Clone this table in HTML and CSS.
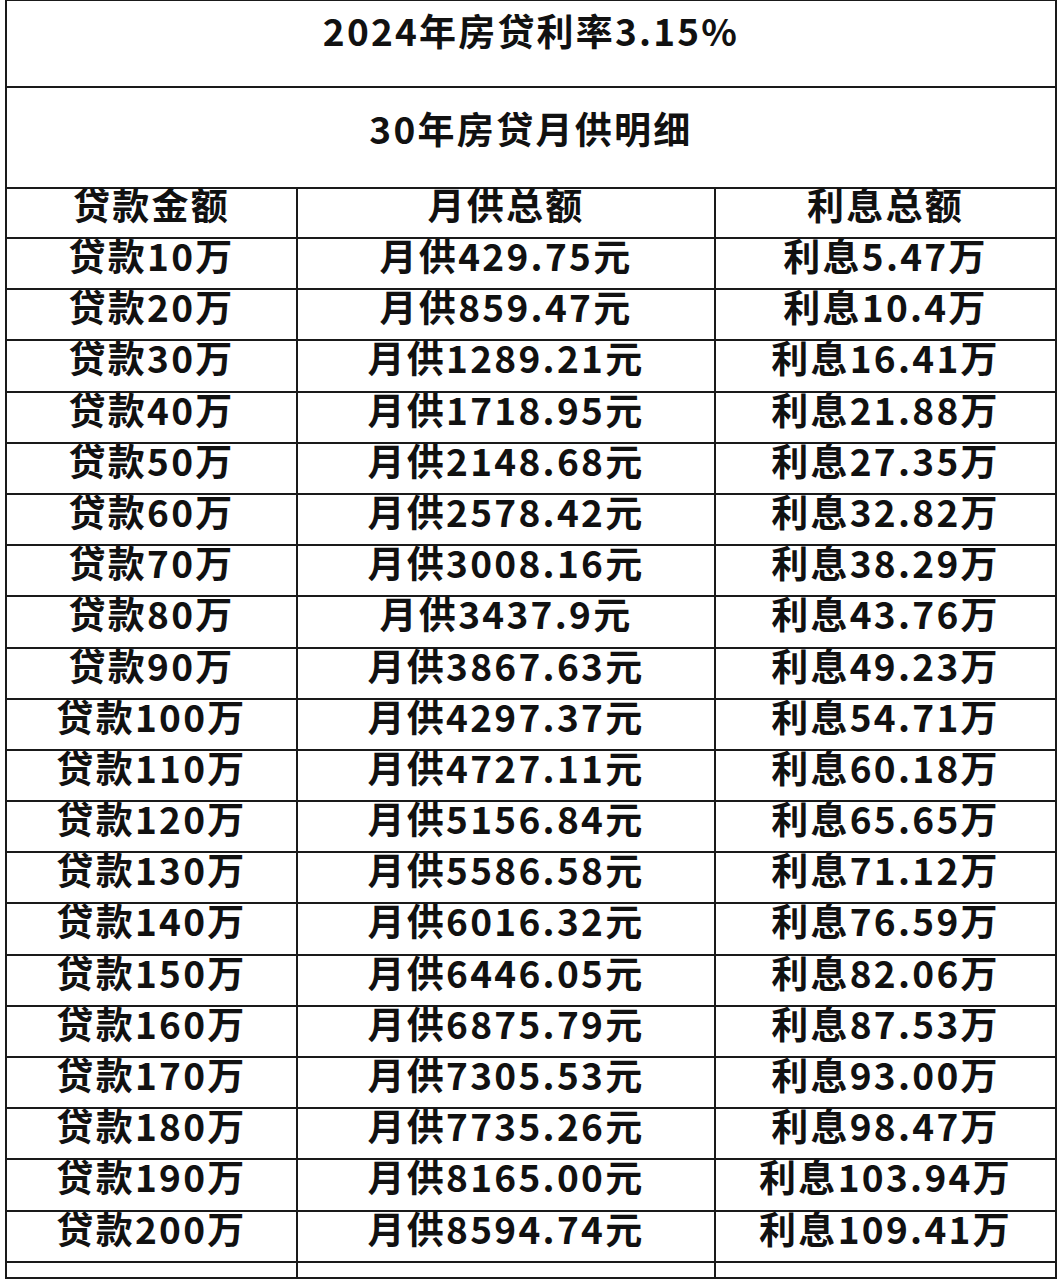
FILE: index.html
```html
<!DOCTYPE html>
<html lang="zh-CN">
<head>
<meta charset="utf-8">
<title>2024年房贷利率3.15%</title>
<link rel="stylesheet" href="styles.css">
</head>
<body>
<table class="sheet">
  <colgroup>
    <col class="c1">
    <col class="c2">
    <col class="c3">
  </colgroup>
  <tr class="r-title"><td colspan="3" class="title">2024年房贷利率3.15%</td></tr>
  <tr class="r-sub"><td colspan="3" class="sub">30年房贷月供明细</td></tr>
  <tr class="r-head"><td>贷款金额</td><td>月供总额</td><td>利息总额</td></tr>
  <tr class="r-data"><td>贷款10万</td><td>月供429.75元</td><td>利息5.47万</td></tr>
  <tr class="r-data"><td>贷款20万</td><td>月供859.47元</td><td>利息10.4万</td></tr>
  <tr class="r-data"><td>贷款30万</td><td>月供1289.21元</td><td>利息16.41万</td></tr>
  <tr class="r-data"><td>贷款40万</td><td>月供1718.95元</td><td>利息21.88万</td></tr>
  <tr class="r-data"><td>贷款50万</td><td>月供2148.68元</td><td>利息27.35万</td></tr>
  <tr class="r-data"><td>贷款60万</td><td>月供2578.42元</td><td>利息32.82万</td></tr>
  <tr class="r-data"><td>贷款70万</td><td>月供3008.16元</td><td>利息38.29万</td></tr>
  <tr class="r-data"><td>贷款80万</td><td>月供3437.9元</td><td>利息43.76万</td></tr>
  <tr class="r-data"><td>贷款90万</td><td>月供3867.63元</td><td>利息49.23万</td></tr>
  <tr class="r-data"><td>贷款100万</td><td>月供4297.37元</td><td>利息54.71万</td></tr>
  <tr class="r-data"><td>贷款110万</td><td>月供4727.11元</td><td>利息60.18万</td></tr>
  <tr class="r-data"><td>贷款120万</td><td>月供5156.84元</td><td>利息65.65万</td></tr>
  <tr class="r-data"><td>贷款130万</td><td>月供5586.58元</td><td>利息71.12万</td></tr>
  <tr class="r-data"><td>贷款140万</td><td>月供6016.32元</td><td>利息76.59万</td></tr>
  <tr class="r-data"><td>贷款150万</td><td>月供6446.05元</td><td>利息82.06万</td></tr>
  <tr class="r-data"><td>贷款160万</td><td>月供6875.79元</td><td>利息87.53万</td></tr>
  <tr class="r-data"><td>贷款170万</td><td>月供7305.53元</td><td>利息93.00万</td></tr>
  <tr class="r-data"><td>贷款180万</td><td>月供7735.26元</td><td>利息98.47万</td></tr>
  <tr class="r-data"><td>贷款190万</td><td>月供8165.00元</td><td>利息103.94万</td></tr>
  <tr class="r-data"><td>贷款200万</td><td>月供8594.74元</td><td>利息109.41万</td></tr>
  <tr class="r-empty"><td></td><td></td><td></td></tr>
</table>
</body>
</html>
```
FILE: styles.css
```css
html, body {
  margin: 0;
  padding: 0;
  background: #ffffff;
}

body {
  font-family: "Noto Sans CJK SC", "Noto Sans", sans-serif;
  color: #111111;
  overflow: hidden;
}

.sheet {
  border-collapse: collapse;
  table-layout: fixed;
  margin-left: 5px;
  margin-top: -1px;
  width: 1052px;
}

.c1 { width: 291px; }
.c2 { width: 418px; }
.c3 { width: 341px; }

.sheet td {
  border: 2px solid #1a1a1a;
  padding: 0;
  text-align: center;
  vertical-align: top;
  font-weight: 700;
  font-size: 37px;
  line-height: 32px;
  letter-spacing: 2.3px;
  white-space: nowrap;
  box-sizing: border-box;
}

.r-title td {
  height: 87px;
  padding-top: 13px;
  letter-spacing: 2.2px;
}

.r-sub td {
  height: 101px;
  padding-top: 24px;
}

.r-head td {
  height: 50px;
  padding-top: 0;
  line-height: 30px;
}

.r-data td {
  height: 51.2px;
  padding-top: 0;
}

.r-empty td {
  height: 16px;
}
```
